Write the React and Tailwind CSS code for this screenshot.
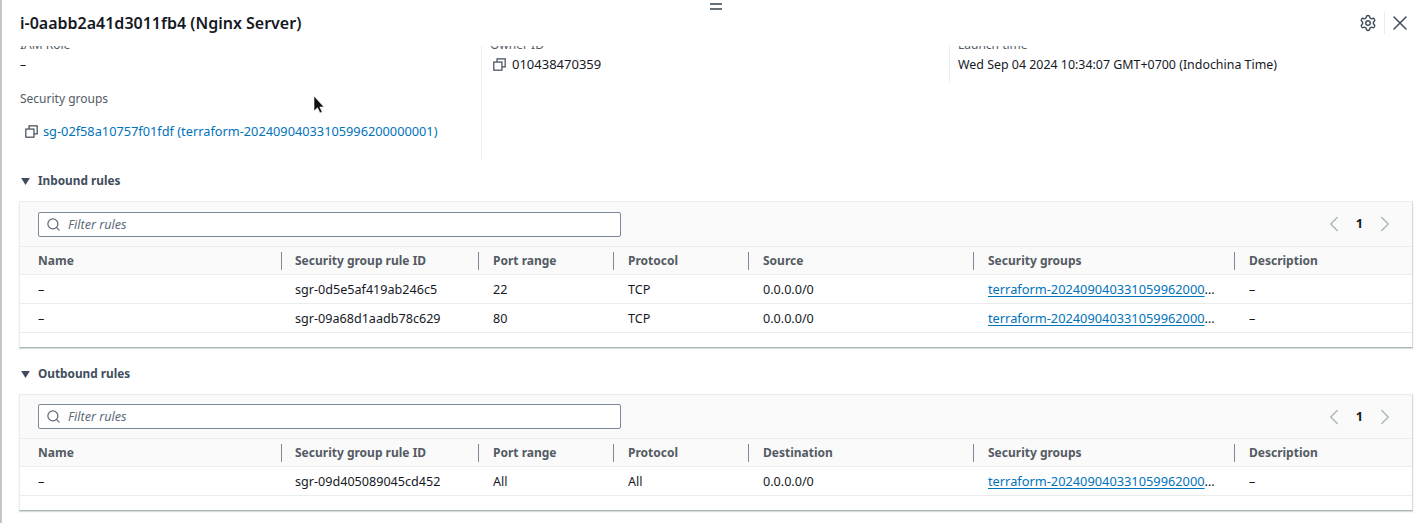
import React from "react"
import { Search, ChevronLeft, ChevronRight, Settings, X } from "lucide-react"

const LINK_NAME = "terraform-202409040331059962000"

const CopyIcon = ({ className = "" }) => (
  <svg viewBox="0 0 16 16" className={`w-[13px] h-[13px] ${className}`} fill="none" stroke="#414d5c" strokeWidth="1.5">
    <rect x="1" y="5" width="10" height="10" />
    <path d="M5 5V1h10v10h-4" />
  </svg>
)

const Cell = ({ divider, children, className = "" }) => (
  <div className={`relative flex items-center min-w-0 ${className}`}>
    {divider && <span className="absolute left-0 top-1/2 -translate-y-1/2 h-[18px] w-px bg-[#7d8998]" />}
    {children}
  </div>
)

const RulesTable = ({ title, sourceLabel, rows, toolbarClass, className = "" }) => (
  <section className={className}>
    <div className="flex items-center h-5 pt-[2px] pl-[19px] gap-[8px]">
      <svg viewBox="0 0 10 8" className="w-[9px] h-[7px]" fill="#414d5c">
        <path d="M0 0h10L5 8z" />
      </svg>
      <h3 className="text-[11.8px] font-bold text-[#414d5c]">{title}</h3>
    </div>
    <div className="mt-[11px] ml-[17px] mr-[14px] border border-[#eaeded] border-b-[#aab7b8] border-r-[#d5dbdb] shadow-[0_1px_1px_rgba(0,28,36,0.15)]">
      <div className={`bg-[#fafafa] flex items-center justify-between pl-[18px] pr-[14px] border-b border-[#eaeded] ${toolbarClass}`}>
        <div className="w-[583px] h-[25px] bg-white border border-[#7d8998] rounded-[2px] flex items-center pl-[7px] gap-[7px]">
          <Search size={15} strokeWidth={2} className="text-[#5f6b7a]" />
          <span className="text-[12.6px] italic text-[#5f6b7a] pt-[2px]">Filter rules</span>
        </div>
        <div className="flex items-center">
          <ChevronLeft size={26} strokeWidth={1.3} className="text-[#aab7b8]" />
          <span className="text-[12.8px] font-bold text-[#16191f] ml-[9px] mr-[9px]">1</span>
          <ChevronRight size={26} strokeWidth={1.3} className="text-[#aab7b8]" />
        </div>
      </div>
      <div className="grid grid-cols-[261px_197px_135px_135px_225px_261px_1fr] bg-[#fafafa] h-[28px] border-b border-[#eaeded] text-xs font-bold text-[#545b64]">
        <Cell className="pl-[18px]">Name</Cell>
        <Cell divider className="pl-[14px]">Security group rule ID</Cell>
        <Cell divider className="pl-[15px]">Port range</Cell>
        <Cell divider className="pl-[15px]">Protocol</Cell>
        <Cell divider className="pl-[15px]">{sourceLabel}</Cell>
        <Cell divider className="pl-[15px]">Security groups</Cell>
        <Cell divider className="pl-[15px]">Description</Cell>
      </div>
      {rows.map(row => (
        <div key={row.id} className="grid grid-cols-[261px_197px_135px_135px_225px_261px_1fr] h-[29px] pt-[2px] border-b border-[#eaeded] text-[12.6px] text-[#16191f]">
          <Cell className="pl-[18px]">–</Cell>
          <Cell className="pl-[14px]">{row.id}</Cell>
          <Cell className="pl-[15px]">{row.port}</Cell>
          <Cell className="pl-[15px]">{row.protocol}</Cell>
          <Cell className="pl-[15px]">0.0.0.0/0</Cell>
          <Cell className="pl-[15px]">
            <span className="whitespace-nowrap text-[12.8px]">
              <a className="text-[#0073bb] underline underline-offset-2">{LINK_NAME}</a>
              <span>…</span>
            </span>
          </Cell>
          <Cell className="pl-[15px]">–</Cell>
        </div>
      ))}
      <div className="h-[14px] bg-white" />
    </div>
  </section>
)

export default function App() {
  return (
    <div className="relative w-[1427px] h-[523px] overflow-hidden bg-white font-['Noto_Sans',sans-serif] text-[#16191f] border-l-2 border-[#c4c8c8]">
      <div className="absolute left-[708px] top-[3px] w-[12px] h-[7px] border-y-2 border-[#687078]" />
      <header className="h-[46px] flex items-center justify-between pl-[18px] pr-[15px]">
        <h2 className="text-base font-semibold -mt-px">i-0aabb2a41d3011fb4 (Nginx Server)</h2>
        <div className="flex items-center">
          <Settings size={18} strokeWidth={1.9} className="text-[#414d5c]" />
          <span className="w-px h-[22px] bg-[#eaeded] ml-[7px] mr-[3px]" />
          <X size={24} strokeWidth={1.5} className="text-[#414d5c]" />
        </div>
      </header>
      <div className="h-[477px] overflow-hidden">
        <div className="-mt-[9px] grid grid-cols-[461px_468px_1fr] pl-[18px]">
          <div className="h-[123px]">
            <p className="text-xs text-[#545b64] h-[18px]">IAM Role</p>
            <p className="text-xs mt-[2px]">–</p>
            <p className="text-xs text-[#545b64] mt-[18px]">Security groups</p>
            <div className="flex items-center mt-[15px] ml-[5px] gap-[5px]">
              <CopyIcon />
              <a className="text-[12.77px] text-[#0073bb]">sg-02f58a10757f01fdf (terraform-20240904033105996200000001)</a>
            </div>
          </div>
          <div className="h-[123px] border-l border-[#eaeded] pl-[11px]">
            <p className="text-xs text-[#545b64] h-[18px] -ml-[3px]">Owner ID</p>
            <div className="flex items-center gap-[6px]">
              <CopyIcon />
              <span className="text-[13px]">010438470359</span>
            </div>
          </div>
          <div className="h-[45px] border-l border-[#eaeded] pl-[8px]">
            <p className="text-xs text-[#545b64] h-[18px]">Launch time</p>
            <p className="text-[12.42px] mt-px">Wed Sep 04 2024 10:34:07 GMT+0700 (Indochina Time)</p>
          </div>
        </div>
        <RulesTable
          className="mt-[10px]"
          title="Inbound rules"
          sourceLabel="Source"
          toolbarClass="h-[45px]"
          rows={[
            { id: "sgr-0d5e5af419ab246c5", port: "22", protocol: "TCP" },
            { id: "sgr-09a68d1aadb78c629", port: "80", protocol: "TCP" },
          ]}
        />
        <RulesTable
          className="mt-[15px]"
          title="Outbound rules"
          sourceLabel="Destination"
          toolbarClass="h-[44px]"
          rows={[{ id: "sgr-09d405089045cd452", port: "All", protocol: "All" }]}
        />
      </div>
      <svg viewBox="0 0 12 18" className="absolute left-[311px] top-[96px] w-[12px] h-[18px]">
        <path d="M1 0v15l3.5-3.2L7 17l2.2-1-2.4-5H11z" fill="#111" stroke="#fff" strokeWidth="0.6" />
      </svg>
    </div>
  )
}
